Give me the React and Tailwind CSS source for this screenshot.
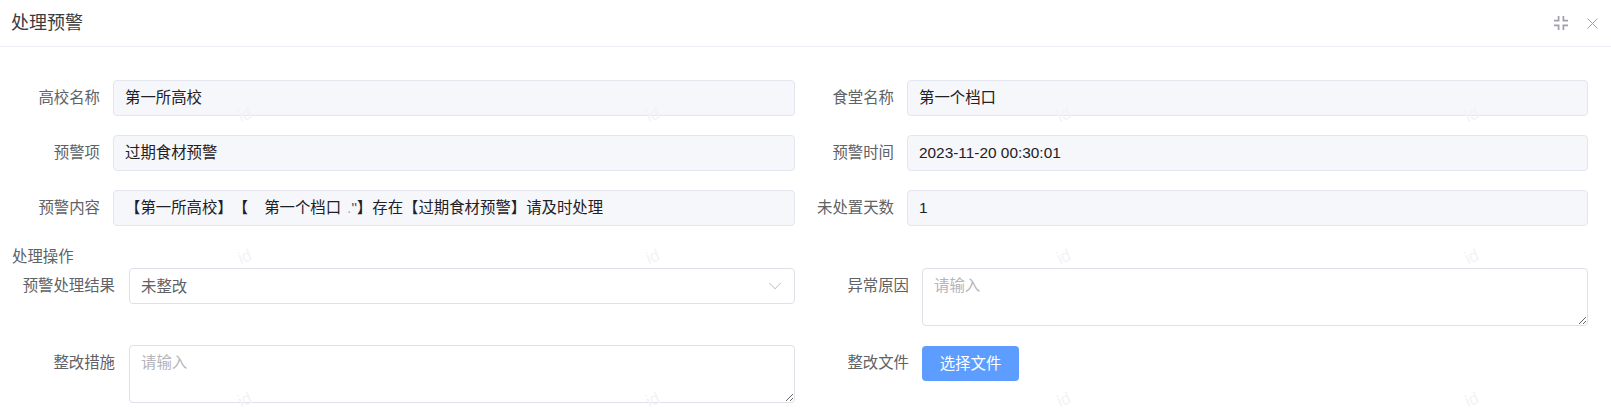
import React from "react";
import { ChevronDown } from "lucide-react";

const readonlyBox =
  "ml-[13px] flex h-[36px] w-full items-center whitespace-pre rounded-[4px] border border-[#e4e6ef] bg-[#f5f7fb] px-[11px] text-[15.4px] text-[#1f2024]";

function ReadonlyRow({ label, children }) {
  return (
    <div className="flex items-center">
      <label className="w-[88px] shrink-0 text-right text-[15.4px] text-[#606266]">
        {label}
      </label>
      <div className={readonlyBox}>{children}</div>
    </div>
  );
}

function FormRow({ label, labelClass, children }) {
  return (
    <div className="flex items-start">
      <label
        className={`${labelClass} shrink-0 pt-[7px] text-right text-[15.4px] leading-[22px] text-[#606266]`}
      >
        {label}
      </label>
      <div className="min-w-0 flex-1">{children}</div>
    </div>
  );
}

function Remark() {
  return (
    <textarea
      placeholder="请输入"
      className="block h-[58px] w-full rounded-[4px] border border-[#dfe0e8] bg-white px-[11px] py-[6px] text-[15.4px] leading-[22px] outline-none placeholder:text-[#b4b5bb]"
    />
  );
}

const marks = [
  [245, 115],
  [653, 115],
  [1064, 115],
  [1472, 115],
  [245, 257],
  [653, 257],
  [1064, 257],
  [1472, 257],
  [245, 400],
  [653, 400],
  [1064, 400],
  [1472, 400],
];

function App() {
  return (
    <div className="relative h-[418px] w-full overflow-hidden bg-white font-['Liberation_Sans','Noto_Sans_CJK_SC',sans-serif]">
      <div className="flex h-[47px] items-center justify-between border-b border-[#ebeef5] pl-[11px] pr-[13px]">
        <h2 className="text-[18px] font-normal text-[#3a3b3f]">处理预警</h2>
        <div className="flex items-center gap-[19px] text-[#a0a0aa]">
          <svg width="14" height="14" viewBox="0 0 14 14" fill="none" stroke="currentColor" strokeWidth="1.7">
            <path d="M4.6 0v4.6H0M9.4 0v4.6H14M4.6 14V9.4H0M9.4 14V9.4H14" />
          </svg>
          <svg width="11" height="11" viewBox="0 0 11 11" fill="none" stroke="currentColor" strokeWidth="1">
            <path d="M.5.5l10 10M10.5.5l-10 10" />
          </svg>
        </div>
      </div>

      <div className="pl-3 pr-[23px] pt-[33px]">
        <div className="grid grid-cols-[783px_782px] gap-x-[11px] gap-y-[19px]">
          <ReadonlyRow label="高校名称">第一所高校</ReadonlyRow>
          <ReadonlyRow label="食堂名称">第一个档口</ReadonlyRow>
          <ReadonlyRow label="预警项">过期食材预警</ReadonlyRow>
          <ReadonlyRow label="预警时间">2023-11-20 00:30:01</ReadonlyRow>
          <ReadonlyRow label="预警内容">
            <span className="[text-spacing-trim:space-all]">【第一所高校】【</span>
            <span className="ml-[16px]">第一个档口</span>
            <span className="ml-[6px] text-[#a9a9ad]">.</span>
            <span className="text-[#55555a]">"</span>
            <span className="[text-spacing-trim:space-all]">】存在【过期食材预警】请及时处理</span>
          </ReadonlyRow>
          <ReadonlyRow label="未处置天数">1</ReadonlyRow>
        </div>

        <h3 className="mb-px mt-[21px] text-[15.4px] font-normal leading-[20px] text-[#606266]">
          处理操作
        </h3>

        <div className="grid grid-cols-[783px_782px] gap-x-[11px] gap-y-[19px]">
          <FormRow label="预警处理结果" labelClass="mr-[14px] w-[103px]">
            <div className="flex h-[36px] w-full items-center justify-between rounded-[4px] border border-[#dfe0e8] bg-white px-[11px] text-[15.4px] text-[#606266]">
              <span className="pt-[2px]">未整改</span>
              <ChevronDown className="-mr-[3px] h-[22px] w-[22px] text-[#c0c4cc]" strokeWidth={1.1} />
            </div>
          </FormRow>
          <FormRow label="异常原因" labelClass="mr-[13px] w-[103px]">
            <Remark />
          </FormRow>
          <FormRow label="整改措施" labelClass="mr-[14px] w-[103px]">
            <Remark />
          </FormRow>
          <FormRow label="整改文件" labelClass="mr-[13px] w-[103px]">
            <button className="mt-px h-[35px] w-[97px] rounded-[4px] bg-[#5c9dff] text-[15.4px] text-white">
              选择文件
            </button>
          </FormRow>
        </div>
      </div>

      {marks.map(([x, y]) => (
        <span
          key={`${x}-${y}`}
          style={{ left: x, top: y }}
          className="pointer-events-none absolute -translate-x-1/2 -translate-y-1/2 -rotate-[22deg] text-[17px] text-[#f3f3f5]"
        >
          id
        </span>
      ))}
    </div>
  );
}

export default App;
